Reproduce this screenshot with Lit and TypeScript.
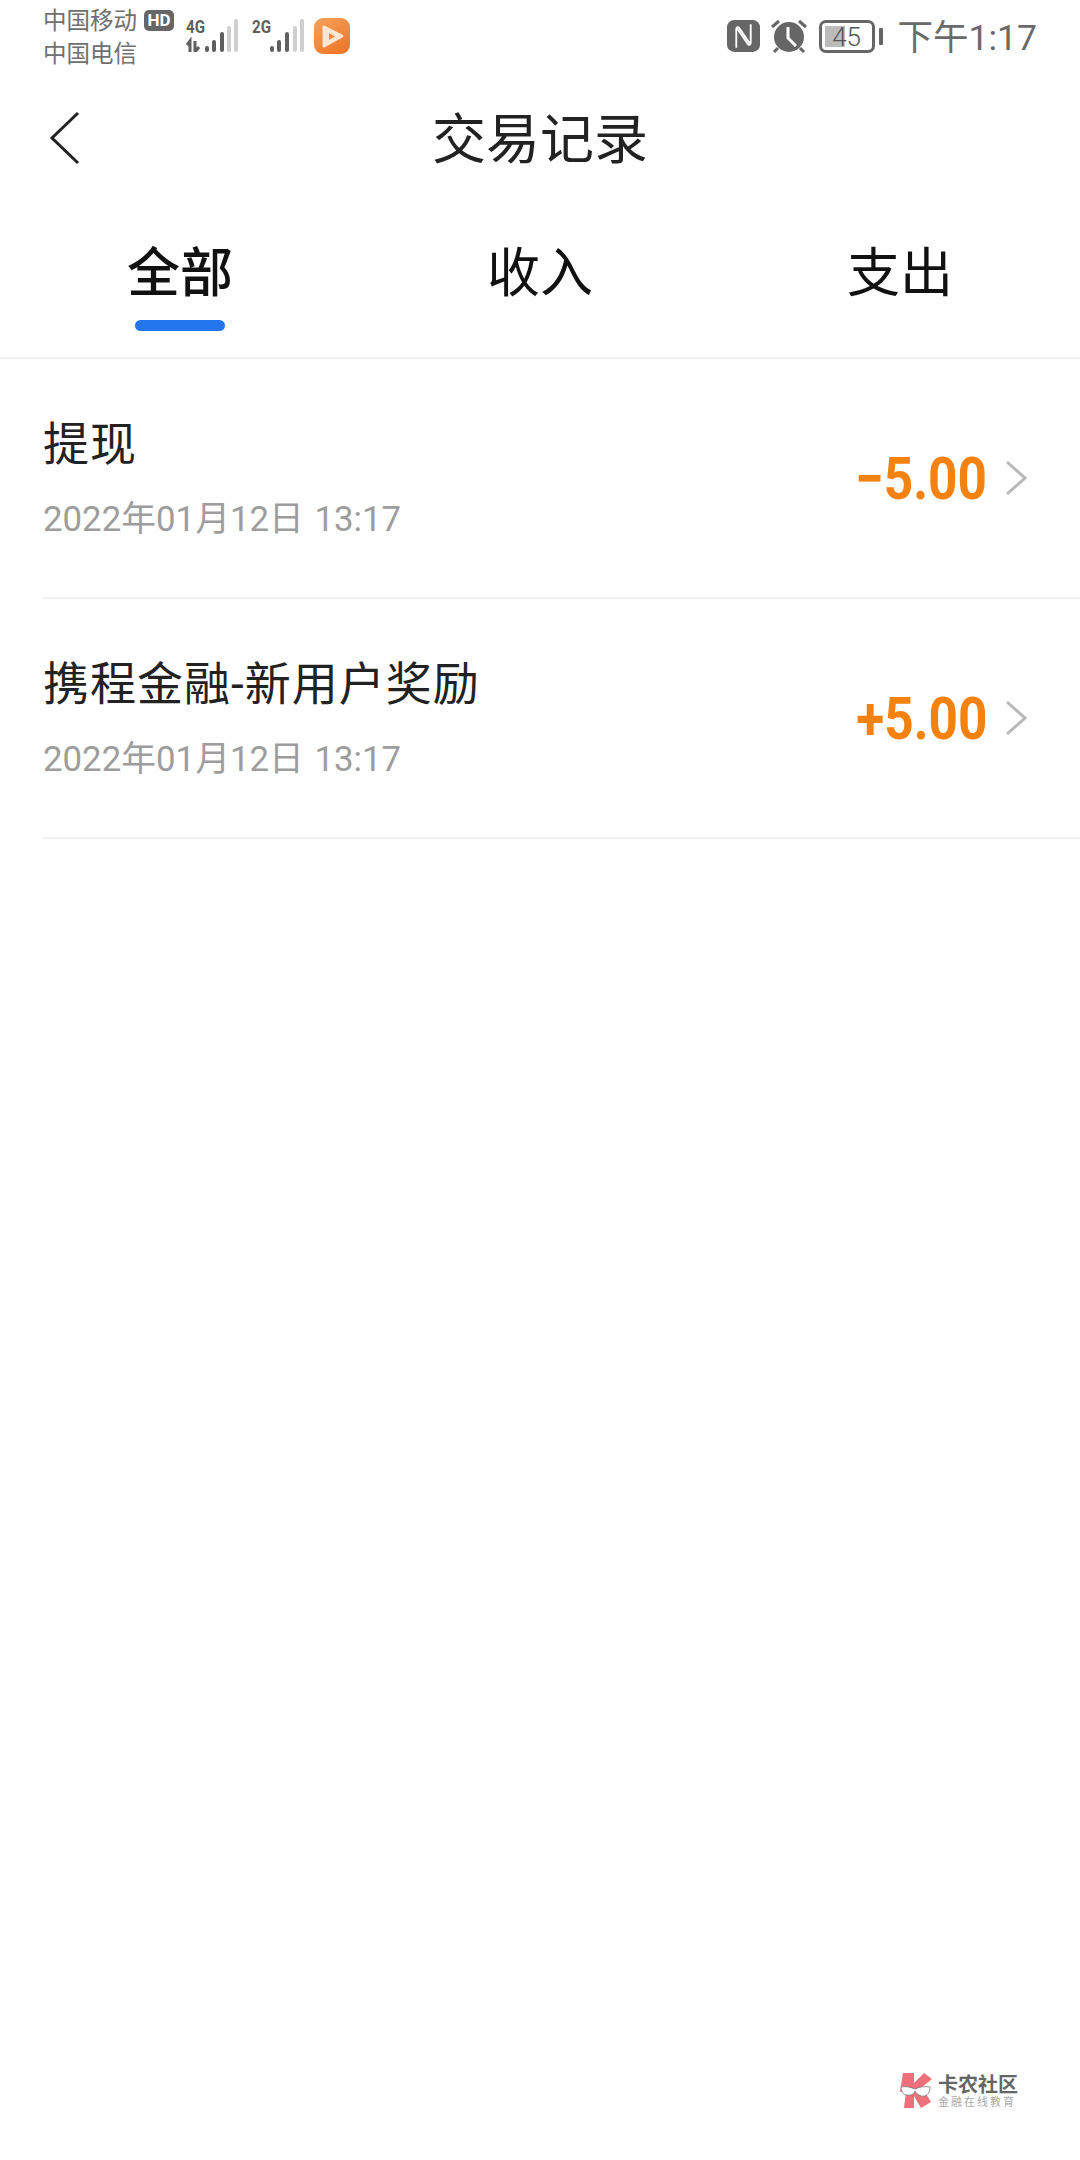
import { LitElement, html, css, svg } from 'lit';
import { customElement } from 'lit/decorators.js';
import { classMap } from 'lit/directives/class-map.js';

type Trade = {
    title: string;
    time: string;
    amount: string;
};

const trades: Trade[] = [
    { title: '提现', time: '2022年01月12日 13:17', amount: '−5.00' },
    { title: '携程金融-新用户奖励', time: '2022年01月12日 13:17', amount: '+5.00' },
];

const tabs = ['全部', '收入', '支出'];

// bars are [x, top, light] in a 38px tall box
const signal = (label: string, bars: number[][], arrows = false) => html`
    <svg class="signal" width="52" height="38" viewBox="0 0 52 38">
        <text x="0" y="19" class="net" textLength="19" lengthAdjust="spacingAndGlyphs">${label}</text>
        ${arrows
            ? svg`<path d="M4 38 V27 L1 31 M9 27 V38 L13 33 M9 38 H10" fill="none" stroke="#5f5f5f" stroke-width="3"></path>`
            : ''}
        ${bars.map(
            ([x, top, light]) =>
                svg`<rect x=${x} y=${top} width="4" height=${38 - top} rx="2" fill=${light ? '#cfcfcf' : '#5f5f5f'}></rect>`
        )}
    </svg>
`;

@customElement('app-root')
export class AppRoot extends LitElement {
    static styles = css`
        :host {
            display: block;
            position: relative;
            width: 1080px;
            height: 2160px;
            overflow: hidden;
            background: #fefefe;
            font-family: 'Roboto', 'Noto Sans CJK SC', sans-serif;
        }

        .status {
            display: flex;
            height: 80px;
            padding: 0 43px 0 43px;
            box-sizing: border-box;
            color: #666;
        }

        .carrier {
            width: 94px;
            padding-top: 5px;
            font-size: 23.5px;
            line-height: 33px;
            white-space: nowrap;
            color: #707070;
        }

        .hd {
            width: 30px;
            height: 21px;
            margin: 10px 0 0 7px;
            border-radius: 5px;
            background: #666;
            color: #fff;
            font-weight: 700;
            font-size: 17px;
            line-height: 21px;
            text-align: center;
        }

        .signal {
            margin: 14px 0 0 12px;
        }

        .signal + .signal {
            margin-left: 14px;
        }

        .net {
            font-family: 'Roboto', sans-serif;
            font-weight: 700;
            font-size: 18px;
            fill: #5f5f5f;
        }

        .app {
            margin: 18px 0 0 10px;
        }

        .status-right {
            display: flex;
            align-items: flex-start;
            margin-left: auto;
        }

        .nfc {
            margin-top: 20px;
        }

        .alarm {
            margin: 19px 0 0 11px;
        }

        .battery {
            position: relative;
            display: flex;
            align-items: center;
            justify-content: center;
            width: 56px;
            height: 33px;
            margin: 20px 0 0 12px;
            box-sizing: border-box;
            border: 3px solid #666;
            border-radius: 7px;
            font-size: 26px;
            font-weight: 300;
            color: #555;
        }

        .battery-fill {
            position: absolute;
            left: 3px;
            top: 3px;
            bottom: 3px;
            width: 20px;
            background: #bcbcbc;
        }

        .battery-level {
            position: relative;
        }

        .battery-nub {
            width: 4px;
            height: 17px;
            margin: 28px 0 0 4px;
            border-radius: 1px;
            background: #666;
        }

        .clock {
            margin: 16px 0 0 15px;
            font-size: 35.5px;
            line-height: 44px;
            color: #6a6a6a;
            white-space: nowrap;
        }

        .nav {
            display: flex;
            align-items: center;
            justify-content: center;
            position: relative;
            height: 120px;
        }

        .back {
            position: absolute;
            left: 49px;
            top: 31px;
        }

        .nav-title {
            padding-top: 2px;
            font-size: 54px;
            line-height: 64px;
            color: #222;
        }

        .tabs {
            display: grid;
            grid-template-columns: repeat(3, 1fr);
            height: 159px;
            box-sizing: border-box;
            border-bottom: 2px solid #f0f0f0;
        }

        .tab {
            display: flex;
            flex-direction: column;
            align-items: center;
            padding-top: 43px;
            font-size: 53px;
            line-height: 62px;
            color: #111;
        }

        .tab.active {
            font-weight: 500;
        }

        .tab-bar {
            width: 90px;
            height: 11px;
            margin-top: 15px;
            border-radius: 6px;
            background: #2376ee;
        }

        .row {
            display: flex;
            align-items: center;
            justify-content: space-between;
            height: 240px;
            margin-left: 43px;
            padding-right: 53px;
            box-sizing: border-box;
            border-bottom: 2px solid #f0f0f0;
        }

        .row-text {
            padding-top: 1px;
        }

        .row-title {
            font-size: 46px;
            letter-spacing: 1px;
            line-height: 54px;
            color: #222;
        }

        .row-time {
            margin-top: 26px;
            font-size: 34.8px;
            word-spacing: 2px;
            line-height: 44px;
            color: #9d9d9d;
        }

        .row-end {
            display: flex;
            align-items: center;
            gap: 18px;
        }

        .amount {
            margin-top: 2px;
            font-size: 60px;
            font-weight: 700;
            line-height: 70px;
            color: #f5810e;
            transform: scaleX(0.855);
            transform-origin: right center;
        }

        .mark {
            position: absolute;
            left: 900px;
            top: 2072px;
            display: flex;
            gap: 3px;
        }

        .mark-text {
            padding-top: 2px;
        }

        .mark-name {
            font-size: 20px;
            line-height: 22px;
            font-weight: 700;
            color: #666;
            white-space: nowrap;
        }

        .mark-sub {
            font-size: 11px;
            line-height: 14px;
            letter-spacing: 2px;
            color: #a8a8a8;
            white-space: nowrap;
        }
    `;

    render() {
        return html`
            <div class="status">
                <div class="carrier">中国移动<br />中国电信</div>
                <div class="hd">HD</div>
                ${signal(
                    '4G',
                    [
                        [19, 32],
                        [26, 26],
                        [34, 18],
                        [41, 12, 1],
                        [48, 5, 1],
                    ],
                    true
                )}
                ${signal('2G', [
                    [18, 32],
                    [25, 26],
                    [33, 18],
                    [41, 12, 1],
                    [48, 5, 1],
                ])}
                <svg class="app" width="36" height="36" viewBox="0 0 36 36">
                    <defs>
                        <linearGradient id="app-bg" x1="0" y1="0" x2="0.6" y2="1">
                            <stop offset="0" stop-color="#f7a25c"></stop>
                            <stop offset="1" stop-color="#ee7a2c"></stop>
                        </linearGradient>
                    </defs>
                    <rect width="36" height="36" rx="9" fill="url(#app-bg)"></rect>
                    <path d="M10 9 L28 18 L10 28 Z" fill="#fbe6d4" stroke="#fbe6d4" stroke-width="3" stroke-linejoin="round"></path>
                    <path d="M15 15 L21 18.5 L15 22 Z" fill="#ee8a42"></path>
                </svg>
                <div class="status-right">
                    <svg class="nfc" width="33" height="32" viewBox="0 0 32 31">
                        <rect width="32" height="31" rx="7" fill="#666"></rect>
                        <path d="M9 27 V9 C9 7 11 6 12 8 L23 24 M23 4 V22 C23 24 21 25 20 23 L9 7" fill="none" stroke="#fff" stroke-width="1.8"></path>
                    </svg>
                    <svg class="alarm" width="36" height="34" viewBox="0 0 36 34">
                        <circle cx="18" cy="18" r="15" fill="#666"></circle>
                        <path d="M1 8 L8 2 M35 8 L28 2 M7 29 L3 33 M29 29 L33 33" stroke="#666" stroke-width="3" fill="none"></path>
                        <path d="M17 8 V19 L25 27" stroke="#fff" stroke-width="3" fill="none"></path>
                    </svg>
                    <div class="battery">
                        <div class="battery-fill"></div>
                        <span class="battery-level">45</span>
                    </div>
                    <div class="battery-nub"></div>
                    <div class="clock">下午1:17</div>
                </div>
            </div>
            <div class="nav">
                <svg class="back" width="32" height="54" viewBox="0 0 32 54">
                    <path d="M29 2 L3 27 L29 52" fill="none" stroke="#222" stroke-width="3"></path>
                </svg>
                <div class="nav-title">交易记录</div>
            </div>
            <div class="tabs">
                ${tabs.map(
                    (tab, i) => html`
                        <div class=${classMap({ tab: true, active: i === 0 })}>
                            ${tab}
                            ${i === 0 ? html`<div class="tab-bar"></div>` : ''}
                        </div>
                    `
                )}
            </div>
            ${trades.map(
                t => html`
                    <div class="row">
                        <div class="row-text">
                            <div class="row-title">${t.title}</div>
                            <div class="row-time">${t.time}</div>
                        </div>
                        <div class="row-end">
                            <div class="amount">${t.amount}</div>
                            <svg width="22" height="36" viewBox="0 0 22 36">
                                <path d="M2 2 L20 18 L2 34" fill="none" stroke="#b8b8b8" stroke-width="3"></path>
                            </svg>
                        </div>
                    </div>
                `
            )}
            <div class="mark">
                <svg width="35" height="36" viewBox="0 0 35 36">
                    <path d="M3 1 H14 V11 L24 1 L32 7 L22 15 L31 30 L21 36 L14 24 V36 H4 L6 20 H0 Z" fill="#ef6f7b"></path>
                    <path d="M1 15 C6 14 10 15 15 17 C19 15 24 14 30 15 C30 22 26 25 21 24 C18 23 16 21 15 19 C14 22 11 24 7 23 C3 23 1 19 1 15 Z" fill="#fff" stroke="#777" stroke-width="0.8"></path>
                </svg>
                <div class="mark-text">
                    <div class="mark-name">卡农社区</div>
                    <div class="mark-sub">金融在线教育</div>
                </div>
            </div>
        `;
    }
}
